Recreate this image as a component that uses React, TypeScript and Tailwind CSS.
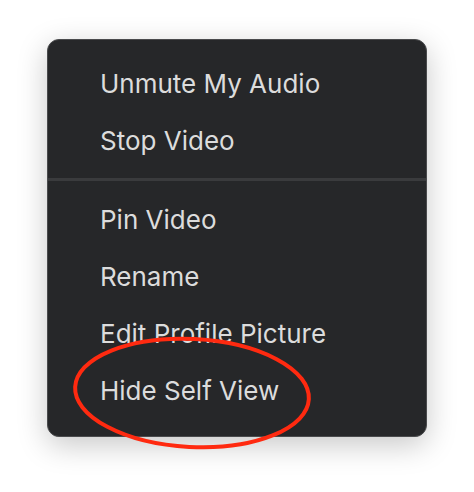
const groups = [
  ["Unmute My Audio", "Stop Video"],
  ["Pin Video", "Rename", "Edit Profile Picture", "Hide Self View"],
];

function MenuItem({ label }: { label: string }) {
  return (
    <div className="h-[57px] pl-[52px] text-[26px] leading-[57px] text-[#dcdcdc] whitespace-nowrap">
      {label}
    </div>
  );
}

export default function App() {
  return (
    <div className="w-[474px] h-[492px] bg-white pt-[39px] pl-[47px] font-['Inter','Liberation_Sans',sans-serif]">
      <div className="relative w-[380px]">
        <div className="w-[380px] h-[398px] rounded-[12px] bg-[#262729] border border-[#4a4b4d] shadow-[0_8px_30px_rgba(0,0,0,0.22)] flex flex-col">
          <div className="pt-[15px]">
            {groups[0].map((l) => (
              <MenuItem key={l} label={l} />
            ))}
          </div>
          <div className="mt-[9px] h-[3px] bg-[#3a3b3d]" />
          <div className="pt-[10px]">
            {groups[1].map((l) => (
              <MenuItem key={l} label={l} />
            ))}
          </div>
        </div>
        {/* red annotation circle */}
        <svg
          className="absolute left-[20px] top-[292px] pointer-events-none"
          width="260"
          height="130"
          viewBox="0 0 260 130"
        >
          <ellipse
            cx="125"
            cy="62"
            rx="117"
            ry="54"
            transform="rotate(3 125 62)"
            fill="none"
            stroke="#ff2a10"
            strokeWidth="4"
          />
        </svg>
      </div>
    </div>
  );
}
